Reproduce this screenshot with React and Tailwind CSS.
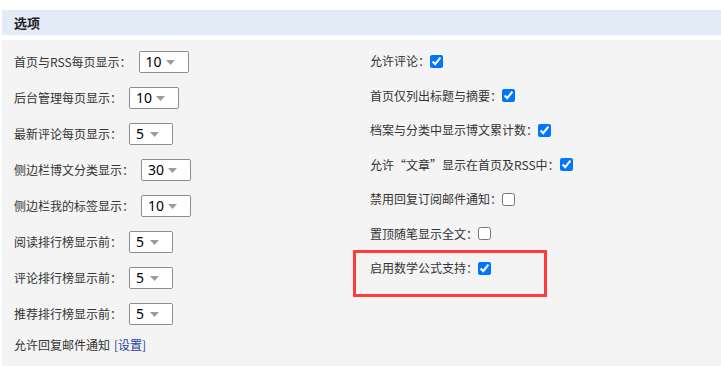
import React from "react";

const leftRows = [
  { label: "首页与RSS每页显示：", value: "10", width: 50 },
  { label: "后台管理每页显示：", value: "10", width: 50 },
  { label: "最新评论每页显示：", value: "5", width: 44 },
  { label: "侧边栏博文分类显示：", value: "30", width: 50 },
  { label: "侧边栏我的标签显示：", value: "10", width: 50 },
  { label: "阅读排行榜显示前：", value: "5", width: 44 },
  { label: "评论排行榜显示前：", value: "5", width: 44 },
  { label: "推荐排行榜显示前：", value: "5", width: 44 },
];

const rightRows = [
  { label: "允许评论：", checked: true },
  { label: "首页仅列出标题与摘要：", checked: true },
  { label: "档案与分类中显示博文累计数：", checked: true },
  { label: "允许“文章”显示在首页及RSS中：", checked: true },
  { label: "禁用回复订阅邮件通知：", checked: false },
  { label: "置顶随笔显示全文：", checked: false },
  { label: "启用数学公式支持：", checked: true },
];

function FakeSelect({ value, width }) {
  return (
    <div
      className="ml-[7px] h-[22px] flex items-center justify-between border border-[#8d8d8d] rounded-[2px] bg-white pl-[6px] pr-[13px] text-[14px] text-black"
      style={{ width }}
    >
      <span className="font-['Noto_Sans',sans-serif] leading-none">{value}</span>
      <svg width="9" height="5" viewBox="0 0 9 5">
        <path d="M0 0h9L4.5 5z" fill="#9b9b9b" />
      </svg>
    </div>
  );
}

export default function App() {
  return (
    <div className="w-[721px] h-[366px] bg-white pl-[2px] pt-[10px] font-['Noto_Sans_CJK_SC','Noto_Sans',sans-serif] text-[12px] text-[#333]">
      {/* Header bar */}
      <div className="h-[25px] bg-[#e3ebf6] flex items-center pl-[12px] mb-[5px]">
        <span className="text-[13px] font-bold text-[#222]">选项</span>
      </div>

      {/* Options body */}
      <div className="h-[326px] bg-[#f4f4f4] flex">
        <div className="w-[368px] pl-[12px] pt-[4px]">
          {leftRows.map((r) => (
            <div key={r.label} className="h-[36px] flex items-center">
              <span>{r.label}</span>
              <FakeSelect value={r.value} width={r.width} />
            </div>
          ))}
          <div className="h-[26px] flex items-center">
            <span>允许回复邮件通知</span>
            <a href="#" className="ml-[4px] text-[#223d9c]">[设置]</a>
          </div>
        </div>

        <div className="relative flex-1 pt-[4px]">
          {rightRows.map((r) => (
            <div key={r.label} className="h-[34.5px] flex items-center">
              <span>{r.label}</span>
              <input type="checkbox" defaultChecked={r.checked} className="w-[13px] h-[13px] appearance-auto" />
            </div>
          ))}
          {/* red highlight box */}
          <div className="absolute left-[-17px] top-[210px] w-[194px] h-[47px] border-[3px] border-[#ff3b3b]" />
        </div>
      </div>
    </div>
  );
}
